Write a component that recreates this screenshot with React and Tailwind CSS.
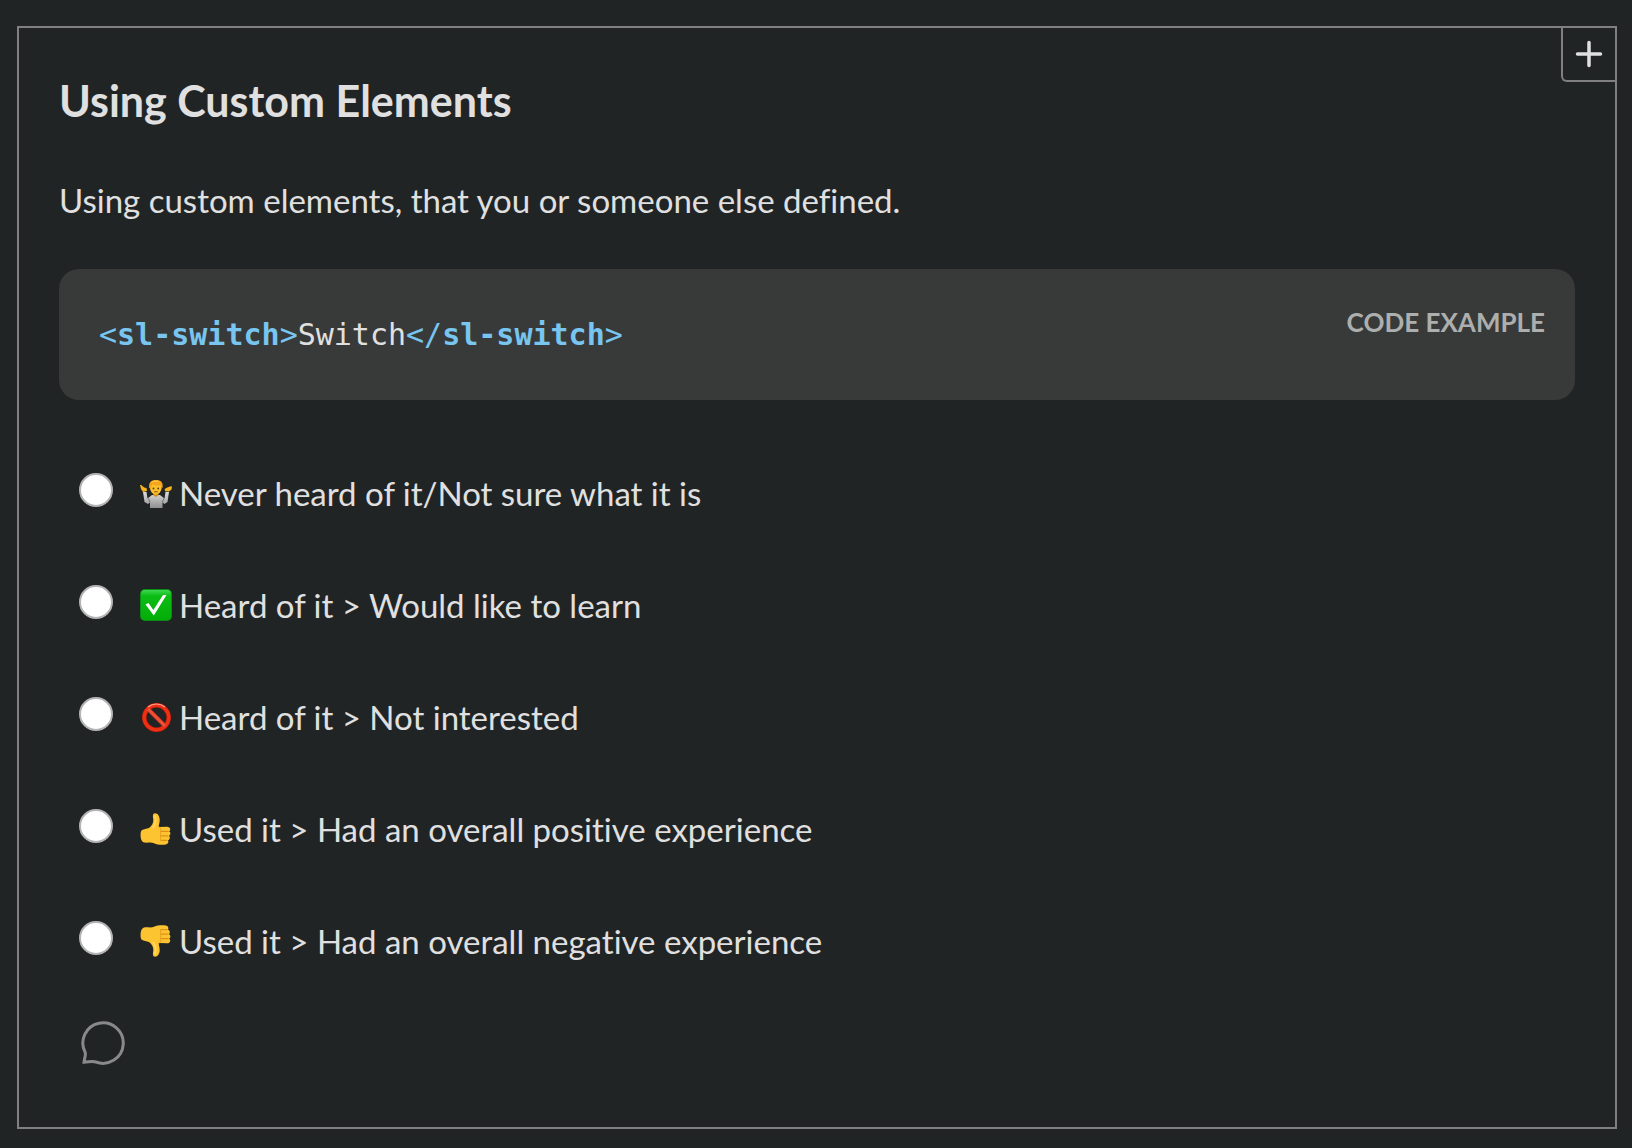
import React, { useState } from 'react';

const ShrugIcon = () => (
  <svg viewBox="0 0 32 32" className="size-8 shrink-0" aria-hidden="true">
    <defs>
      <linearGradient id="shirt" x1="0" y1="0" x2="0" y2="1">
        <stop offset="0" stopColor="#dedede" />
        <stop offset="1" stopColor="#8f8f8f" />
      </linearGradient>
    </defs>
    <path d="M3 15h3.500l1 6.500L12 18h8l4.500 3.500 1-6.500H29l-1.500 10-3 2-2-1.500v5.500H10v-5.500L8 27l-3.500-2Z" fill="url(#shirt)" />
    <path d="M8.500 21.500 10 25.500M23.800 21.500 22.300 25.500" stroke="#6f6f6f" fill="none" />
    <path d="M0 8h1.200l3 2.500 2.300.5L7 14l-4 1-2-3ZM32 9.500l-1.300-.3-4 1.500-2 1.200.3 2.300 4 .3 2.500-2Z" fill="#f6b21d" />
    <path d="M13.300 16h5v2.500l-2.500 1.500-2.500-1.500Z" fill="#d98f10" />
    <ellipse cx="15.800" cy="11" rx="5.800" ry="6.500" fill="#fbc02d" />
    <path d="M9.200 11C8.500 5.500 11 3 16 3s7.500 2.500 6.500 8l-1.200-.5-.8-2.500c-3 .8-6 .5-8.300-.8l-1.400 4Z" fill="#f5a51c" />
    <path d="M11 5.500c2-2 6-2.500 9-1-3-.2-6 0-9 1Z" fill="#ffd75a" />
    <circle cx="13.500" cy="11.500" r=".9" fill="#5b3a12" />
    <circle cx="18.200" cy="11.500" r=".9" fill="#5b3a12" />
    <path d="M14.200 14.800h3.500" stroke="#8c4a10" />
  </svg>
);

const CheckIcon = () => (
  <svg viewBox="0 0 32 32" className="size-8 shrink-0" aria-hidden="true">
    <defs>
      <linearGradient id="green" x1="0" y1="0" x2="0" y2="1">
        <stop offset="0" stopColor="#3fd653" />
        <stop offset=".2" stopColor="#0abd14" />
        <stop offset="1" stopColor="#04ad08" />
      </linearGradient>
    </defs>
    <rect width="32" height="32" rx="5" fill="#0a8c16" />
    <rect x="1" y="1" width="30" height="30" rx="4" fill="url(#green)" />
    <path d="m5.500 15.500 3-1.500 4.800 7L23 6h3.500L13.800 26.500Z" fill="#fff" />
  </svg>
);

const ProhibitedIcon = () => (
  <svg viewBox="0 0 32 32" className="size-8 shrink-0" aria-hidden="true">
    <circle cx="16.500" cy="16.500" r="12.200" fill="none" stroke="#c41f0b" strokeWidth="4.500" />
    <path d="m8 8 17 17" stroke="#b92a18" strokeWidth="4.500" />
    <circle cx="16.500" cy="16.500" r="12.300" fill="none" stroke="#ee3015" strokeWidth="3.200" />
    <path d="m8 8 17 17" stroke="#ee5038" strokeWidth="3" />
    <path d="M8 6c5-4 12-4 17 0" stroke="#ffa08c" strokeWidth="1.200" fill="none" />
  </svg>
);

const ThumbIcon = ({ down = false }) => (
  <svg
    viewBox="0 0 32 32"
    className={down ? 'size-8 shrink-0 -scale-y-100' : 'size-8 shrink-0'}
    aria-hidden="true"
  >
    <path
      d="M1.500 17.500c2.500-1.700 5-1.500 7.500-2.500 3-2 4.500-5 4.300-8.500C12.700 3 12.500.5 15 .3c3 0 4.500 3 4.700 6.200.2 3-1 5-1 7.500l8.500-.3c3.500 0 3.800 4 1.800 4.600 2 .8 1.800 4-.2 4.500 1.600.9 1.300 4-.8 4.400 1 1.500.2 3.800-2.200 4.200-4 .6-8.300.3-11.800-1.200-3-1.300-6-.2-10-.7-4-.7-4-10-2.500-12Z"
      fill="#fdc432"
    />
    <path d="M20.500 18.400h8M20.500 22.900h7.800M20.500 27.300h7" stroke="#dd9216" strokeWidth="1.200" />
    <path d="M18.600 14c2 0 2.400 1.500 2 4v9.500" stroke="#e9a322" strokeWidth="1" fill="none" />
    <path d="M15 2.500c1.500 5 .5 9-2 12.500" stroke="#ffdc6b" strokeWidth="1.500" fill="none" />
  </svg>
);

const options = [
  { value: 'never', icon: <ShrugIcon />, label: 'Never heard of it/Not sure what it is' },
  { value: 'learn', icon: <CheckIcon />, label: 'Heard of it > Would like to learn' },
  { value: 'not-interested', icon: <ProhibitedIcon />, label: 'Heard of it > Not interested' },
  { value: 'positive', icon: <ThumbIcon />, label: 'Used it > Had an overall positive experience' },
  { value: 'negative', icon: <ThumbIcon down />, label: 'Used it > Had an overall negative experience' },
];

const App = () => {
  const [answer, setAnswer] = useState('');

  return (
    <main className="min-h-screen bg-[#212425] pt-[26px] pr-[15px] pb-5 pl-[17px] font-['Lato','Open_Sans',sans-serif] text-[33px] leading-[48px] text-[#e0e0e0] [font-variant-ligatures:none]">
      <section className="relative border-2 border-[#808080] px-10 pt-[45px] pb-[62px]">
        <button
          type="button"
          aria-label="Add to reading list"
          className="absolute top-0 right-0 flex size-[54px] items-center justify-center rounded-bl-md border-b-2 border-l-2 border-[#808080]"
        >
          <svg viewBox="0 0 28 28" className="size-7" fill="none" stroke="currentColor" strokeWidth="3.500" strokeLinecap="round">
            <path d="M14 2.500v23M2.500 14h23" />
          </svg>
        </button>

        <h2 id="question-title" className="text-[43px] leading-[56px] font-bold">Using Custom Elements</h2>
        <p className="mt-[47px]">Using custom elements, that you or someone else defined.</p>

        <div className="mt-[45px] flex items-start justify-between rounded-[20px] bg-[#383a39] pt-[37px] pr-[30px] pb-[41px] pl-10">
          <pre className="mt-[5px] font-['DejaVu_Sans_Mono',monospace] text-[30px] leading-[48px]">
            <code className="font-['DejaVu_Sans_Mono',monospace]">
              <span className="text-[#78c5f0]">&lt;<b>sl-switch</b>&gt;</span>
              Switch
              <span className="text-[#78c5f0]">&lt;/<b>sl-switch</b>&gt;</span>
            </code>
          </pre>
          <span className="text-[26px] leading-8 font-bold text-[#adaeae]">CODE EXAMPLE</span>
        </div>

        <fieldset aria-labelledby="question-title" className="mt-[69px] flex flex-col gap-16 pl-5">
          {options.map((option) => (
            <label key={option.value} className="flex items-start">
              <input
                type="radio"
                name="custom_elements"
                value={option.value}
                checked={answer === option.value}
                onChange={() => setAnswer(option.value)}
                className="mt-1 mr-[27px] size-[34px] shrink-0 appearance-none rounded-full border-2 border-[#b4b4b4] bg-white checked:border-8 checked:border-[#3b82f6]"
              />
              <span className="flex items-center gap-[7px]">
                {option.icon}
                <span>{option.label}</span>
              </span>
            </label>
          ))}
        </fieldset>

        <button type="button" aria-label="Leave a comment" className="mt-14 ml-[22px] block text-[#888a8a]">
          <svg viewBox="0 0 44 44" className="size-11" fill="none" stroke="currentColor" strokeWidth="3">
            <path d="M4.200 31.500A20.200 20.200 0 1 1 15 41C11.500 39.500 8.500 40.800 3 41.200 3.400 37 5 34.500 4.200 31.500Z" />
          </svg>
        </button>
      </section>
    </main>
  );
};

export default App;
